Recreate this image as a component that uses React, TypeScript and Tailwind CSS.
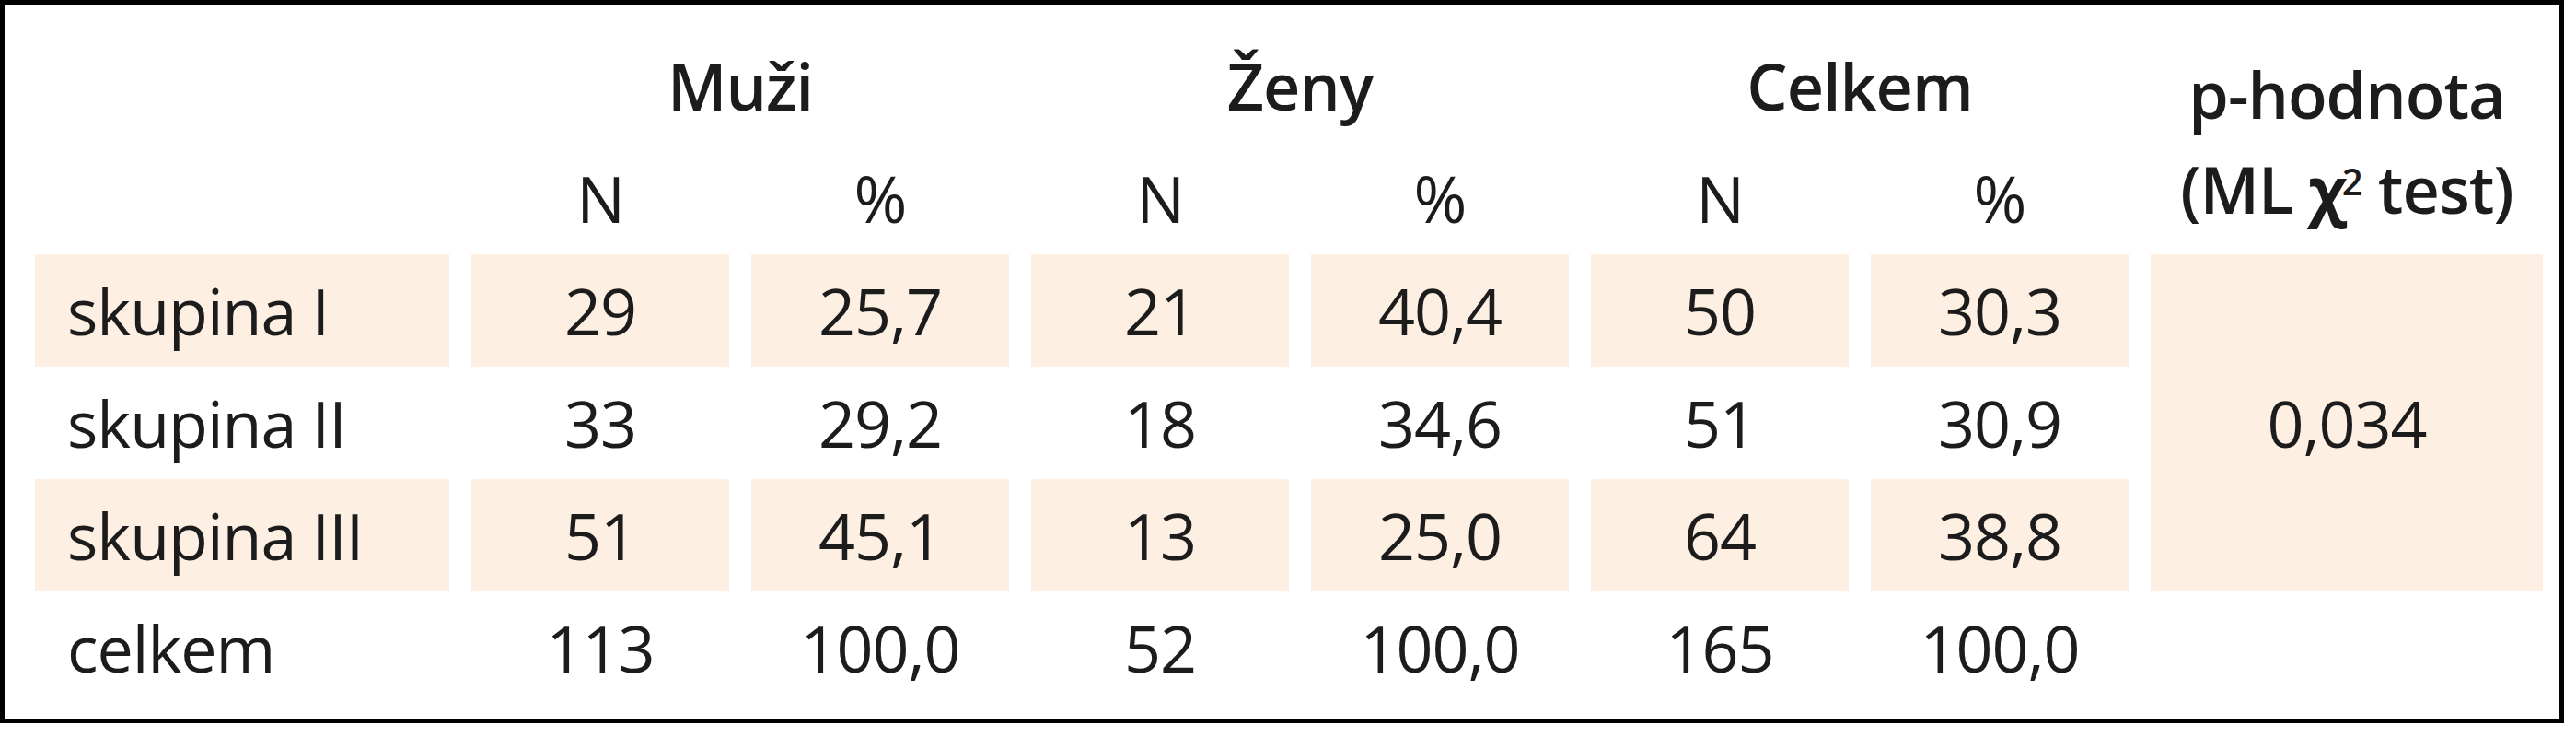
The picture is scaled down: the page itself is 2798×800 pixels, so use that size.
const data = [
  { label: 'skupina I', vals: ['29', '25,7', '21', '40,4', '50', '30,3'], shaded: true },
  { label: 'skupina II', vals: ['33', '29,2', '18', '34,6', '51', '30,9'], shaded: false },
  { label: 'skupina III', vals: ['51', '45,1', '13', '25,0', '64', '38,8'], shaded: true },
  { label: 'celkem', vals: ['113', '100,0', '52', '100,0', '165', '100,0'], shaded: false },
];

const cell = 'h-[122px] leading-[122px] whitespace-nowrap';

const App = () => {
  return (
    <div className="bg-white w-[2798px] h-[800px] font-['Open_Sans',sans-serif] text-[70px] tracking-[-1px] text-[#1c1c1c]">
      <div className="w-[2785px] border-[5px] border-black pt-[27px] pb-[16px] pl-[33px]">
        <div className="grid grid-cols-[450px_repeat(6,280px)_426px] gap-x-[24px]">
          {/* header row 1 */}
          <div className={cell} />
          <div className={`${cell} col-span-2 text-center font-semibold`}>Muži</div>
          <div className={`${cell} col-span-2 text-center font-semibold`}>Ženy</div>
          <div className={`${cell} col-span-2 text-center font-semibold`}>Celkem</div>
          <div className="row-span-2 flex flex-col items-center justify-center font-semibold leading-[103px] whitespace-nowrap">
            <span>p-hodnota</span>
            <span>
              (ML <span className="font-bold">χ</span>
              <sup className="text-[40px] -ml-[4px]">2</sup> test)
            </span>
          </div>

          {/* header row 2 */}
          <div className={cell} />
          {['N', '%', 'N', '%', 'N', '%'].map((h, i) => (
            <div key={i} className={`${cell} text-center`}>
              {h}
            </div>
          ))}

          {/* data rows */}
          {data.map((row, r) => (
            <div key={row.label} className="contents">
              <div className={`${cell} pl-[35px] ${row.shaded ? 'bg-[#fdf0e3]' : ''}`}>{row.label}</div>
              {row.vals.map((v, i) => (
                <div key={i} className={`${cell} text-center ${row.shaded ? 'bg-[#fdf0e3]' : ''}`}>
                  {v}
                </div>
              ))}
              {r === 0 && (
                <div className="row-span-3 bg-[#fdf0e3] flex items-center justify-center">0,034</div>
              )}
              {r === 3 && <div className={cell} />}
            </div>
          ))}
        </div>
      </div>
    </div>
  );
};

export default App;
